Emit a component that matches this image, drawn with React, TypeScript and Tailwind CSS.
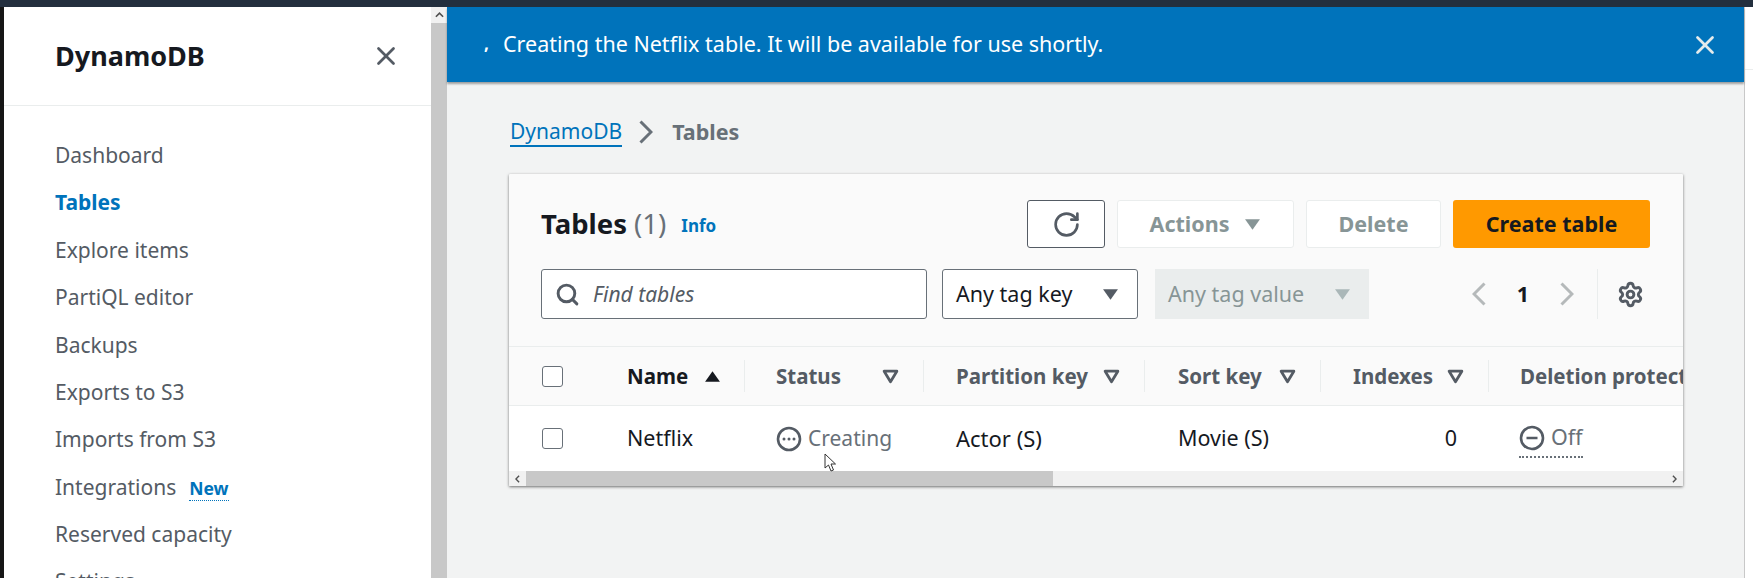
import React from 'react';
import { RotateCw, Search, Settings, X } from 'lucide-react';

const navItems = ['Dashboard', 'Tables', 'Explore items', 'PartiQL editor', 'Backups', 'Exports to S3', 'Imports from S3', 'Integrations', 'Reserved capacity', 'Settings'];

const Caret = ({ className }: { className: string }) => (
  <svg viewBox="0 0 16 12" className={className}>
    <path d="M1 1h14L8 11z" fill="currentColor" />
  </svg>
);

const FilterCaret = () => (
  <svg viewBox="0 0 16 14" className="w-[17px] h-[15px] text-[#545b64]">
    <path d="M2 2h12L8 12z" fill="none" stroke="currentColor" strokeWidth="2.6" strokeLinejoin="round" />
  </svg>
);

const Chevron = ({ dir, className }: { dir: 'left' | 'right'; className: string }) => (
  <svg viewBox="0 0 14 24" className={`w-[14px] h-[24px] ${className}`}>
    <path d={dir === 'left' ? 'M12.5 1.5L2 12l10.5 10.5' : 'M1.5 1.5L12 12 1.5 22.5'} fill="none" stroke="currentColor" strokeWidth="3" />
  </svg>
);

const HeaderCell = ({ label, width, last }: { label: string; width: string; last?: boolean }) => (
  <div className={`${width} shrink-0 flex items-center h-[32px] ${last ? '' : 'border-r border-[#eaeded]'}`}>
    <span className="text-[20.5px] font-bold text-[#545b64] whitespace-nowrap">{label}</span>
    {!last && <span className="ml-auto mr-[24px]"><FilterCaret /></span>}
  </div>
);

export default function App() {
  return (
    <div className="w-[1753px] h-[578px] overflow-hidden flex flex-col bg-white text-[#16191f] font-['Noto_Sans','Open_Sans',sans-serif]">
      <div className="h-[7px] bg-[#232f3e] shrink-0" />
      <div className="flex flex-1 min-h-0">
        <div className="w-[4px] bg-[#161616] shrink-0" />

        <aside className="w-[427px] shrink-0 bg-white">
          <div className="h-[99px] border-b border-[#eaeded] pl-[51px] pr-[30px] flex items-center justify-between">
            <h2 className="text-[27px] font-bold text-[#16191f]">DynamoDB</h2>
            <X className="w-[30px] h-[30px] text-[#545b64]" strokeWidth={2.2} />
          </div>
          <nav className="pl-[51px] pt-[26px] flex flex-col">
            {navItems.map(item => (
              <div key={item} className={`h-[47.4px] shrink-0 flex items-center text-[21px] whitespace-nowrap ${item === 'Tables' ? 'font-bold text-[#0073bb]' : 'text-[#545b64]'}`}>
                {item}
                {item === 'Integrations' && (
                  <span className="ml-[13px] text-[17.5px] font-bold text-[#0073bb] border-b border-dotted border-[#0073bb] leading-[24px] mt-[3px]">New</span>
                )}
              </div>
            ))}
          </nav>
        </aside>

        {/* page scrollbar */}
        <div className="w-[16px] shrink-0 bg-[#c8c8c8] flex flex-col">
          <div className="h-[16px] bg-[#f1f1f1] flex items-center justify-center">
            <svg viewBox="0 0 10 6" className="w-[9px] h-[6px] text-[#505050]">
              <path d="M1 5l4-4 4 4" fill="none" stroke="currentColor" strokeWidth="1.8" />
            </svg>
          </div>
        </div>

        <main className="flex-1 min-w-0 bg-[#f2f3f3] relative">
          <div className="h-[75px] bg-[#0073bb] shadow-[0_2px_2px_rgba(0,0,0,0.35)] flex items-center pl-[37px] pr-[24px] text-white">
            <span className="w-[5px] text-[17px] font-bold leading-none mr-[14px] -mt-[2px]">,</span>
            <span className="text-[21.5px] whitespace-nowrap">Creating the Netflix table. It will be available for use shortly.</span>
            <X className="ml-auto w-[30px] h-[30px] text-[#e4ebeb]" strokeWidth={2.2} />
          </div>

          <div className="pl-[62px] pr-[61px] pt-[30px]">
            <div className="flex items-center h-[40px] ml-[1px]">
              <span className="text-[21px] text-[#0073bb] border-b-2 border-[#0073bb] leading-[28px]">DynamoDB</span>
              <Chevron dir="right" className="text-[#687078] ml-[17px] mr-[19px]" />
              <span className="text-[21.5px] font-bold text-[#687078]">Tables</span>
            </div>

            <section className="mt-[22px] h-[312px] bg-[#fafafa] shadow-[0_1px_3px_rgba(0,0,0,0.55)] flex flex-col overflow-hidden rounded-[1px]">
              <div className="pl-[32px] pr-[33px] pt-[26px]">
                <div className="flex items-center h-[48px]">
                  <h1 className="text-[27.5px] font-bold text-[#16191f] whitespace-nowrap">
                    Tables <span className="font-normal text-[#687078]">(1)</span>
                  </h1>
                  <span className="ml-[15px] mt-[4px] text-[17px] font-bold text-[#0073bb]">Info</span>
                  <div className="ml-auto flex items-center gap-[12px]">
                    <button className="w-[78px] h-[48px] bg-white border border-[#545b64] rounded-[3px] flex items-center justify-center">
                      <RotateCw className="w-[29px] h-[29px] text-[#545b64]" strokeWidth={2.2} />
                    </button>
                    <button className="w-[177px] h-[48px] bg-white border border-[#eaeded] rounded-[3px] flex items-center justify-center gap-[15px] text-[21.5px] font-bold text-[#879596]">
                      Actions <Caret className="w-[17px] h-[13px] text-[#879596]" />
                    </button>
                    <button className="w-[135px] h-[48px] bg-white border border-[#eaeded] rounded-[3px] text-[21.5px] font-bold text-[#879596]">Delete</button>
                    <button className="w-[197px] h-[48px] bg-[#ff9900] rounded-[3px] text-[21.5px] font-bold text-[#16191f]">Create table</button>
                  </div>
                </div>

                <div className="flex items-center mt-[21px] h-[50px]">
                  <div className="w-[386px] h-[50px] bg-white border border-[#687078] rounded-[3px] flex items-center pl-[13px]">
                    <Search className="w-[25px] h-[25px] text-[#545b64]" strokeWidth={2.8} />
                    <span className="ml-[13px] mt-[1px] text-[21px] italic text-[#545b64]">Find tables</span>
                  </div>
                  <div className="ml-[15px] w-[196px] h-[50px] bg-white border border-[#687078] rounded-[3px] flex items-center justify-between pl-[13px] pr-[18px] text-[21.5px] text-[#16191f]">
                    Any tag key <Caret className="w-[17px] h-[13px] text-[#545b64]" />
                  </div>
                  <div className="ml-[17px] w-[214px] h-[50px] bg-[#eaeded] flex items-center justify-between pl-[13px] pr-[18px] text-[21.5px] text-[#879596]">
                    Any tag value <Caret className="w-[17px] h-[13px] text-[#aab7b8]" />
                  </div>
                  <div className="ml-auto flex items-center h-[50px]">
                    <Chevron dir="left" className="text-[#b5b9ba]" />
                    <span className="ml-[31px] mr-[31px] text-[21.5px] font-bold text-[#16191f]">1</span>
                    <Chevron dir="right" className="text-[#b5b9ba]" />
                    <div className="w-px h-[50px] bg-[#eaeded] ml-[23px] mr-[19px]" />
                    <Settings className="w-[27px] h-[27px] text-[#545b64] mr-[6px]" strokeWidth={2.6} />
                  </div>
                </div>
              </div>

              <div className="mt-[27px] h-[60px] border-t border-b border-[#eaeded] flex items-center pl-[33px] overflow-hidden">
                <div className="w-[85px] shrink-0">
                  <div className="w-[21px] h-[21px] border border-[#687078] rounded-[3px] bg-white" />
                </div>
                <div className="w-[118px] shrink-0 flex items-center h-[32px] border-r border-[#eaeded]">
                  <span className="text-[20.5px] font-bold text-[#16191f]">Name</span>
                  <Caret className="w-[17px] h-[13px] text-[#16191f] ml-auto mr-[23px] rotate-180" />
                </div>
                <div className="w-[31px] shrink-0" />
                <HeaderCell label="Status" width="w-[148px]" />
                <div className="w-[32px] shrink-0" />
                <HeaderCell label="Partition key" width="w-[189px]" />
                <div className="w-[33px] shrink-0" />
                <HeaderCell label="Sort key" width="w-[143px]" />
                <div className="w-[32px] shrink-0" />
                <HeaderCell label="Indexes" width="w-[136px]" />
                <div className="w-[31px] shrink-0" />
                <HeaderCell label="Deletion protection" width="w-[200px]" last />
              </div>

              <div className="h-[65px] bg-white flex items-center pl-[33px] text-[21.5px] overflow-hidden">
                <div className="w-[85px] shrink-0">
                  <div className="w-[21px] h-[21px] border border-[#687078] rounded-[3px] bg-white" />
                </div>
                <div className="w-[149px] shrink-0">Netflix</div>
                <div className="w-[180px] shrink-0 flex items-center text-[21px] text-[#687078]">
                  <svg viewBox="0 0 26 26" className="w-[26px] h-[26px] text-[#545b64] mr-[6px]">
                    <circle cx="13" cy="13" r="11" fill="none" stroke="currentColor" strokeWidth="2.6" />
                    <circle cx="8" cy="13" r="1.5" fill="currentColor" />
                    <circle cx="13" cy="13" r="1.5" fill="currentColor" />
                    <circle cx="18" cy="13" r="1.5" fill="currentColor" />
                  </svg>
                  Creating
                </div>
                <div className="w-[222px] shrink-0 text-[22px]">Actor (S)</div>
                <div className="w-[174px] shrink-0">Movie (S)</div>
                <div className="w-[135px] shrink-0 text-right pr-[30px]">0</div>
                <div className="ml-[32px] shrink-0 flex items-center gap-[6px] text-[#687078] border-b-2 border-dotted border-[#687078] h-[38px]">
                  <svg viewBox="0 0 26 26" className="w-[26px] h-[26px] text-[#545b64]">
                    <circle cx="13" cy="13" r="11" fill="none" stroke="currentColor" strokeWidth="2.6" />
                    <path d="M7.5 13h11" stroke="currentColor" strokeWidth="2.6" />
                  </svg>
                  Off
                </div>
              </div>

              {/* table scrollbar */}
              <div className="h-[15px] bg-[#f1f1f1] flex items-center shrink-0">
                <div className="w-[17px] flex items-center justify-center">
                  <svg viewBox="0 0 6 10" className="w-[5px] h-[8px] text-[#505050]">
                    <path d="M5 1L1 5l4 4" fill="none" stroke="currentColor" strokeWidth="1.8" />
                  </svg>
                </div>
                <div className="w-[527px] h-full bg-[#c8c8c8]" />
                <div className="ml-auto w-[17px] flex items-center justify-center">
                  <svg viewBox="0 0 6 10" className="w-[5px] h-[8px] text-[#505050]">
                    <path d="M1 1l4 4-4 4" fill="none" stroke="currentColor" strokeWidth="1.8" />
                  </svg>
                </div>
              </div>
            </section>
          </div>

          {/* mouse pointer in the recording */}
          <svg viewBox="0 0 12 19" className="absolute left-[377px] top-[446px] w-[12px] h-[19px]">
            <path d="M1 1v14l3.5-3 2.5 6 2.5-1-2.5-6h4.5z" fill="#fff" stroke="#333" strokeWidth="1" />
          </svg>
        </main>

        <div className="w-[9px] shrink-0 bg-white border-l border-[#c8c8c8]">
          <div className="h-[63px] border-b border-[#eaeded]" />
        </div>
      </div>
    </div>
  );
}
